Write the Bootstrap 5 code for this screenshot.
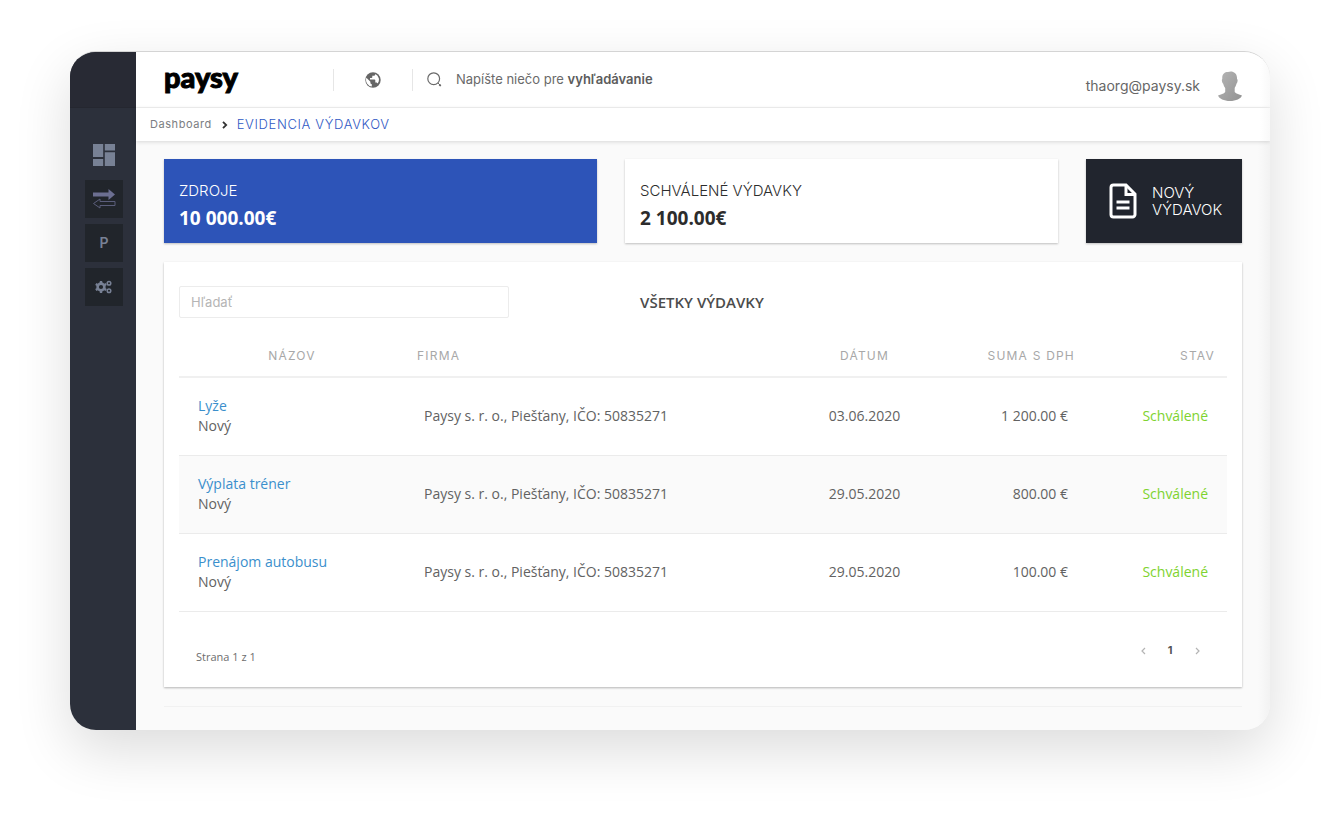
<!DOCTYPE html>
<html lang="sk">
<head>
<meta charset="utf-8">
<meta name="viewport" content="width=device-width, initial-scale=1">
<title>Paysy – Evidencia výdavkov</title>
<link href="https://cdn.jsdelivr.net/npm/bootstrap@5.3.0/dist/css/bootstrap.min.css" rel="stylesheet">
<style>
body{font-family:"Open Sans","Noto Sans",sans-serif;font-size:14px;color:#626262;background:#fff}
a{text-decoration:none}
.stage{padding:51px 70px 88px}
.app-window{border-radius:26px;border-top:1px solid #d4d4d4;box-shadow:0 20px 56px rgba(0,0,0,.14);overflow:hidden;background:#fafafa}
.side{width:66px;flex:none;background:#2c303b}
.side-top{height:56px;background:#282a34;border-bottom:1px solid #252730}
.side-menu{padding:28px 0 0 2px;gap:6px}
.side-btn{width:38px;height:38px;background:#21252b;color:#788195;font:600 14px/38px Inter,sans-serif}
.side-btn.plain{background:none}
.ui-font{font-family:Inter,"Liberation Sans",sans-serif}
.topbar{height:56px;border-bottom:1px solid #f1f1f1;padding:0 28px;background:linear-gradient(to left,#f9f9f9,#fff 10px)}
.crumbs{height:33px;padding:0 14px;gap:9px;background:linear-gradient(to left,#f9f9f9,#fff 10px);box-shadow:0 1px 4px rgba(0,0,0,.14);position:relative;font-family:Inter,sans-serif;font-size:11px}
.crumbs a{color:#7b7d82;letter-spacing:.05em}
.crumbs .here{font-size:13px;font-weight:300;color:#3059c4;letter-spacing:.05em}
.logo{font:900 29px/36px Lato,sans-serif;color:#000;-webkit-text-stroke:1px #000;width:169px;padding-bottom:6px}
.vr-line{width:1px;height:22px;background:#e6e6e6}
.globe-cell{width:78px}
.find-label{color:#6a6a6a;font-size:13px;padding-left:14px;gap:14px}
.find-label b{font-weight:600;color:#5c5c5c}
.account{font-size:14px;color:#666;gap:18px;padding-top:12px}
.content{padding:18px 28px 23px;background:linear-gradient(to left,#f2f2f2,#fafafa 12px)}
.tiles{gap:28px;margin-bottom:19px}
.tile{height:84px;padding:20px 15px;background:#fff;color:#2c2c2c;flex:1 1 0;box-shadow:0 1px 2px rgba(0,0,0,.24)}
.tile.blue{background:#2d54b8;color:#fff}
.tile-label{font:300 15px/24px Inter,sans-serif}
.tile-sum{font-size:19px;line-height:30px;font-weight:700}
.tile-new{width:156px;height:84px;background:#21252e;color:#fff;font:300 15px/17px Inter,sans-serif;gap:15px;padding:0 0 0 23px;box-shadow:0 1px 2px rgba(0,0,0,.24)}
.panel{background:#fff;box-shadow:0 1px 2px rgba(0,0,0,.28);padding:24px 15px 22px;margin-bottom:19px}
.search-col{width:44%}
.search-col input{width:330px;max-width:100%;height:32px;border:1px solid #ececec;border-radius:2px;font:13px Inter,sans-serif;padding:0 11px;box-shadow:none}
.search-col input::placeholder{color:#b5b5b5}
.panel-title{font-size:15px;font-weight:600;color:#4c4c4c;margin:0}
.expenses{table-layout:fixed;margin:16px 0 0;--bs-table-bg:transparent;width:100%}
.expenses th{font:400 12px/20px Inter,sans-serif;color:#a8a8a8;letter-spacing:.1em;height:43px;padding:2px 12px 0;vertical-align:middle;border-bottom:2px solid #f0f0f0}
.expenses td{height:78px;padding:0 19px;line-height:20px;vertical-align:middle;border-bottom:1px solid #ebebeb;color:#626262}
.expenses tr.alt td{background:#fafafa}
.expenses a{color:#3b8fcc}
.expenses td.ok{color:#7ed32f}
.c-name{width:226px}.c-date{width:143px}.c-sum{width:151px}.c-state{width:140px}
.foot{padding:24px 17px 0}
.foot .pageinfo{font-size:11px;line-height:17px;padding-top:12px;color:#6d6d6d}
.pager{gap:1px}
.pager button{width:26px;height:28px;padding:0;border:0;background:none;font:700 11px/28px Inter,sans-serif;color:#555}
.end-rule{height:1px;background:#f1f1f1}
</style>
</head>
<body>
<div class="stage">
<div class="app-window d-flex">
  <nav class="side" aria-label="Hlavné menu">
    <div class="side-top"></div>
    <div class="side-menu d-flex flex-column align-items-center">
      <a href="#" class="side-btn plain d-flex align-items-center justify-content-center" aria-label="Dashboard">
        <svg width="22" height="22" viewBox="0 0 22 22" fill="#788195"><path d="M0 0h10.200v13H0zM11.800 0H22v6.500H11.800zM0 15h10.200v7H0zM11.800 8.200H22V22H11.800z"/></svg></a>
      <a href="#" class="side-btn d-flex align-items-center justify-content-center" aria-label="Platby">
        <svg width="24" height="22" viewBox="0 0 24 22"><path d="M1 4.500h15.500V1l6.500 5.500-6.500 5.500V8.500H1z" fill="#6c6f91"/><path d="M23 13.500H8V11l-6.500 4.500L8 20v-2.500h15z" fill="none" stroke="#5b5e7b"/></svg></a>
      <a href="#" class="side-btn text-center">P</a>
      <a href="#" class="side-btn d-flex align-items-center justify-content-center" aria-label="Nastavenia">
        <svg width="18" height="14" viewBox="0 0 18 14" fill="none" stroke="#788195"><circle cx="6" cy="7" r="3.400" stroke-width="2.600"/><path d="M6 1v2M6 11v2M.8 4l1.700 1M9.500 9l1.700 1M.8 10l1.700-1M9.500 5l1.700-1" stroke-width="2.400"/><circle cx="14" cy="3.200" r="1.800" stroke-width="1.500"/><circle cx="14" cy="10.800" r="1.800" stroke-width="1.500"/></svg></a>
    </div>
  </nav>
  <div class="flex-grow-1">
    <header class="topbar d-flex align-items-center ui-font">
      <a href="#" class="logo">paysy</a>
      <span class="vr-line"></span>
      <a href="#" class="globe-cell d-flex justify-content-center" aria-label="Jazyk">
        <svg width="16" height="16" viewBox="0 0 16 16"><circle cx="8" cy="8" r="7.700" fill="#666"/><path d="M1.400 5.800l4 4v1c0 .8.600 1.400 1.400 1.400v2.200A6.500 6.500 0 0 1 1.400 5.800zM10.300 2c0 1-.7 1.800-1.500 1.800H7.300v1.400c0 .5-.3.800-.8.800H5v1.500h4.500c.5 0 .8.400.8.800v2.200h.8c.7 0 1.300.5 1.500 1.100A6.300 6.300 0 0 0 10.300 2z" fill="#fff"/></svg></a>
      <span class="vr-line"></span>
      <a href="#" class="find-label d-flex align-items-center">
        <svg width="15" height="15" viewBox="0 0 15 15" fill="none" stroke="#6a6a6a"><circle cx="6.700" cy="6.700" r="5.900" stroke-width="1.200"/><path d="M12.800 13l.4.400" stroke-width="2" stroke-linecap="round"/><path d="M11 11l2 2"/></svg>
        <span>Napíšte niečo pre <b>vyhľadávanie</b></span></a>
      <div class="account d-flex align-items-center ms-auto">
        <span>thaorg@paysy.sk</span>
        <svg width="24" height="30" viewBox="0 0 24 30"><defs><linearGradient id="person" x1="0" x2="1" y2="1"><stop stop-color="#b5b5b5"/><stop offset="1" stop-color="#929292"/></linearGradient></defs><path d="M4.300 8C3.800 3 7 .8 10 1c4-1.700 9.500.5 9 7 1 .2.800 3-.5 4.700-.6 2.300-1.500 3.300-1.800 4.300v4c1.500 2 4.500 2.300 7.300 3.500-1 3-6 5.500-12 5.500S1 27.500 0 24.500c2.800-1.200 6-1.500 7.200-3.500v-4c-.6-1-1.400-2-2-4.300C3.700 11 3.500 8.300 4.300 8z" fill="url(#person)"/></svg>
      </div>
    </header>
    <nav class="crumbs d-flex align-items-center" aria-label="Cesta">
      <a href="#">Dashboard</a>
      <svg width="7" height="8" viewBox="0 0 7 8" fill="none" stroke="#333" stroke-width="1.800"><path d="M2 .8L5.200 4 2 7.200"/></svg>
      <span class="here">EVIDENCIA VÝDAVKOV</span>
    </nav>
    <main class="content">
      <div class="tiles d-flex">
        <section class="tile blue"><div class="tile-label">ZDROJE</div><div class="tile-sum">10 000.00€</div></section>
        <section class="tile"><div class="tile-label">SCHVÁLENÉ VÝDAVKY</div><div class="tile-sum">2 100.00€</div></section>
        <button type="button" class="tile-new border-0 d-flex align-items-center text-start">
          <svg width="28" height="36" viewBox="0 0 28 36" fill="none" stroke="#fff" stroke-width="3"><path d="M4.500 2H17l9 9v20.500a2.500 2.500 0 0 1-2.500 2.500h-19A2.500 2.500 0 0 1 2 31.500v-27A2.500 2.500 0 0 1 4.500 2z"/><path d="M17 2v9.500h9M7.500 19h13M7.500 25h13"/></svg>
          <span>NOVÝ<br>VÝDAVOK</span></button>
      </div>
      <section class="panel">
        <div class="d-flex align-items-center">
          <div class="search-col"><input type="text" class="form-control" placeholder="Hľadať" aria-label="Hľadať"></div>
          <h1 class="panel-title">VŠETKY VÝDAVKY</h1>
        </div>
        <table class="table expenses">
          <thead><tr><th class="c-name text-center">NÁZOV</th><th>FIRMA</th><th class="c-date text-center">DÁTUM</th><th class="c-sum text-end">SUMA S DPH</th><th class="c-state text-end">STAV</th></tr></thead>
          <tbody>
            <tr><td><a href="#">Lyže</a><br>Nový</td><td>Paysy s. r. o., Piešťany, IČO: 50835271</td><td class="text-center">03.06.2020</td><td class="text-end">1 200.00 €</td><td class="text-end ok">Schválené</td></tr>
            <tr class="alt"><td><a href="#">Výplata tréner</a><br>Nový</td><td>Paysy s. r. o., Piešťany, IČO: 50835271</td><td class="text-center">29.05.2020</td><td class="text-end">800.00 €</td><td class="text-end ok">Schválené</td></tr>
            <tr><td><a href="#">Prenájom autobusu</a><br>Nový</td><td>Paysy s. r. o., Piešťany, IČO: 50835271</td><td class="text-center">29.05.2020</td><td class="text-end">100.00 €</td><td class="text-end ok">Schválené</td></tr>
          </tbody>
        </table>
        <div class="foot d-flex justify-content-between align-items-start">
          <div class="pageinfo">Strana 1 z 1</div>
          <div class="pager d-flex">
            <button type="button" aria-label="Predchádzajúca"><svg width="5" height="8" viewBox="0 0 5 8" fill="none" stroke="#b4b4b4" stroke-width="1.200"><path d="M4 1L1 4l3 3"/></svg></button>
            <button type="button">1</button>
            <button type="button" aria-label="Nasledujúca"><svg width="5" height="8" viewBox="0 0 5 8" fill="none" stroke="#b4b4b4" stroke-width="1.200"><path d="M1 1l3 3-3 3"/></svg></button>
          </div>
        </div>
      </section>
      <div class="end-rule"></div>
    </main>
  </div>
</div>
</div>
<script src="https://cdn.jsdelivr.net/npm/bootstrap@5.3.0/dist/js/bootstrap.bundle.min.js"></script>
</body>
</html>
